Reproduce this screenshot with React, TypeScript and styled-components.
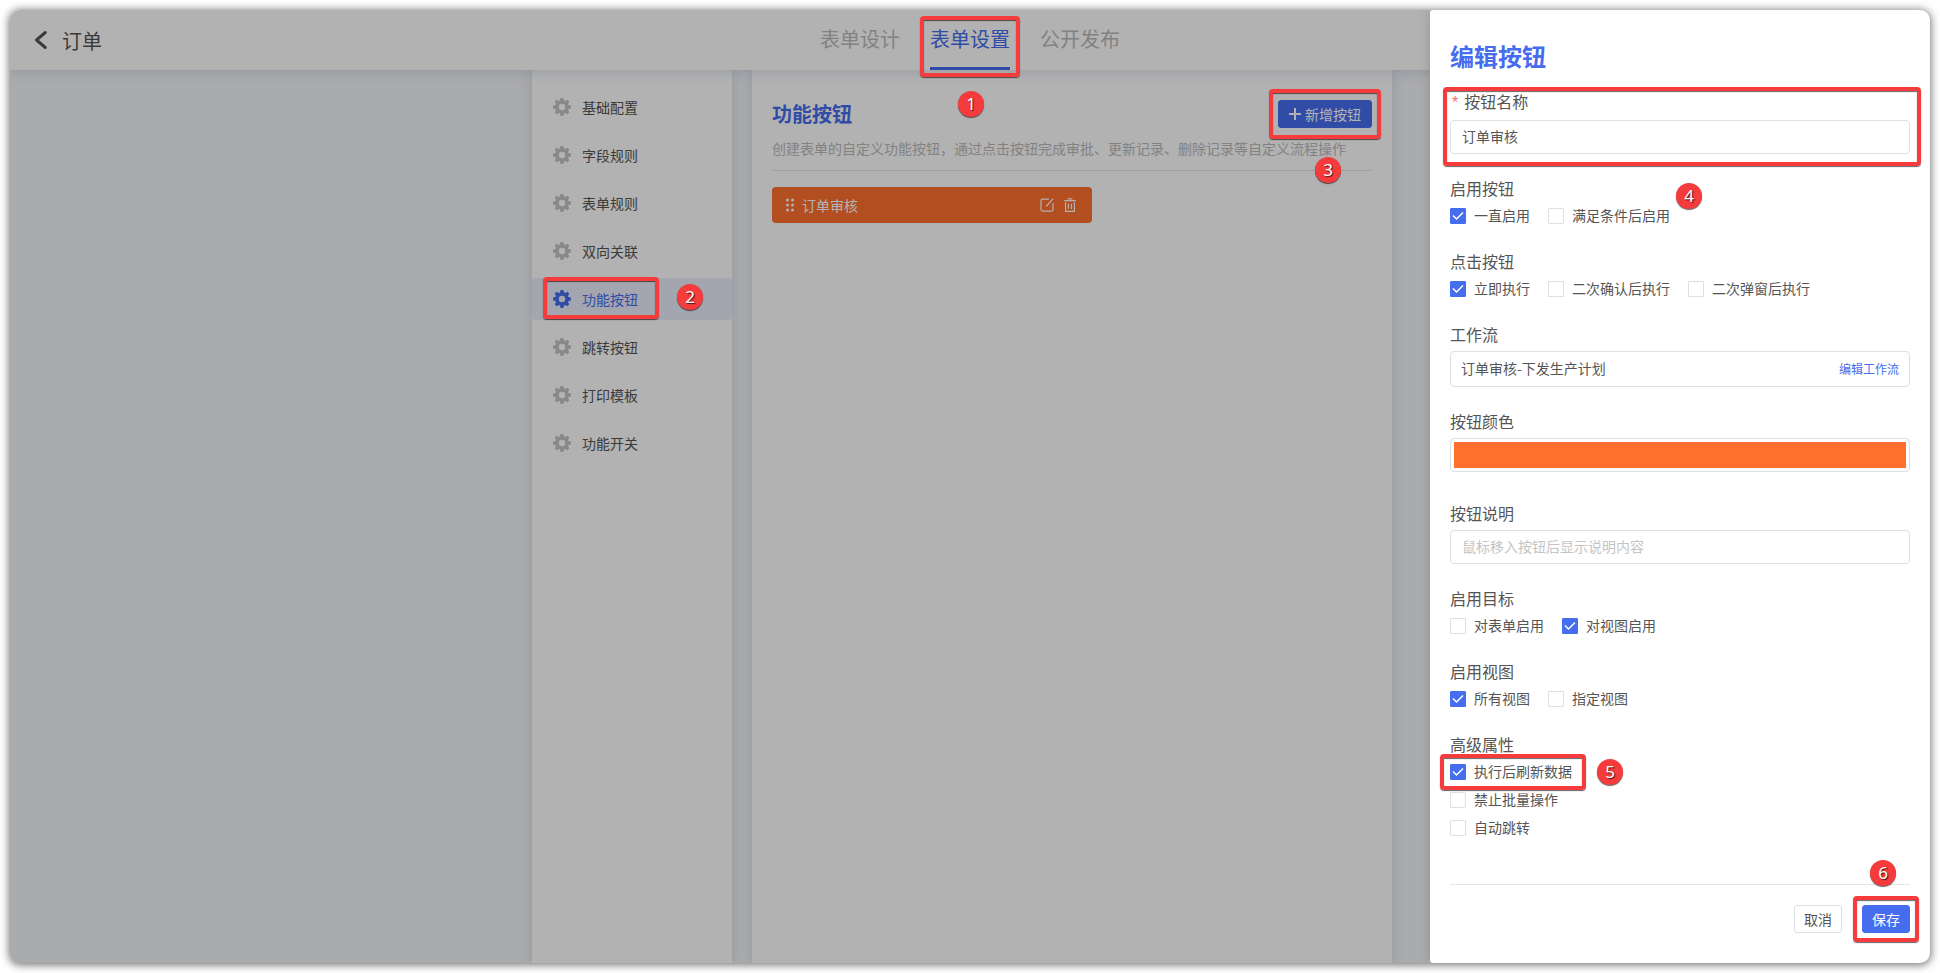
import React from 'react';
import styled, { createGlobalStyle, css } from 'styled-components';

const GlobalStyle = createGlobalStyle`
  *, *::before, *::after { box-sizing: border-box; }
  body {
    margin: 0;
    background: #fff;
    color: #555;
    font-family: 'Noto Sans CJK SC', 'Liberation Sans', sans-serif;
    font-size: 14px;
  }
  button, input { font: inherit; color: inherit; }
  h1, h2, p, ul, fieldset { margin: 0; padding: 0; }
`;

const BLUE = '#466dee';
const RED = '#f53b3b';
const ORANGE = '#ff702e';

const Frame = styled.div`
  display: grid;
  min-height: 100vh;
  padding: 10px;
`;

const Window = styled.div`
  display: grid;
  overflow: hidden;
  border-radius: 10px;
  background: #f4f5f8;
  box-shadow: 0 1px 9px 1px rgba(0, 0, 0, 0.55);
  > * { grid-area: 1 / 1; }
`;

const Page = styled.div`
  display: flex;
  flex-direction: column;
`;

const Mask = styled.div`
  z-index: 10;
  background: rgba(0, 0, 0, 0.3);
`;

/* Numbered call-outs drawn over the interface */
const Outline = styled.span<{ $inset: string }>`
  position: absolute;
  inset: ${(p) => p.$inset};
  z-index: 20;
  border: 4px solid ${RED};
  border-radius: 4px;
  box-shadow: 0 1px 1px rgba(0, 0, 0, 0.6), inset 0 1px 1px rgba(0, 0, 0, 0.6);
  pointer-events: none;
`;

const Step = styled.span<{ $left: number; $top: number }>`
  position: absolute;
  left: ${(p) => p.$left}px;
  top: ${(p) => p.$top}px;
  z-index: 20;
  width: 26px;
  height: 26px;
  border-radius: 50%;
  background: ${RED};
  box-shadow: 0 1px 1px rgba(0, 0, 0, 0.6);
  color: #fff;
  font: 17px/26px 'Noto Sans', sans-serif;
  text-align: center;
  text-shadow: 1px 1px 1px rgba(0, 0, 0, 0.7);
  pointer-events: none;
`;

const Header = styled.header`
  position: relative;
  display: grid;
  grid-template-columns: 1fr auto 1fr;
  height: 60px;
  background: #fff;
  box-shadow: 0 2px 12px rgba(40, 60, 120, 0.16);
`;

const Back = styled.button`
  display: flex;
  align-items: center;
  justify-self: start;
  gap: 14px;
  padding: 0 24px;
  border: 0;
  background: none;
  font-size: 20px;
`;

const Tabs = styled.nav`
  display: flex;
  gap: 30px;
`;

const Tab = styled.a<{ $active?: boolean }>`
  position: relative;
  height: 60px;
  border-bottom: 3px solid transparent;
  color: #bbb;
  font-size: 20px;
  line-height: 58px;
  text-decoration: none;
  ${(p) => p.$active && css`
    border-color: ${BLUE};
    color: ${BLUE};
  `}
`;

const Content = styled.div`
  display: flex;
  flex: 1;
  justify-content: center;
  gap: 20px;
  padding-right: 16px;
`;

const Panel = styled.div`
  background: #fff;
  box-shadow: 0 0 12px rgba(40, 60, 120, 0.16);
`;

const Menu = styled(Panel).attrs({ as: 'nav' })`
  display: flex;
  flex-direction: column;
  gap: 6px;
  width: 200px;
  padding-top: 16px;
`;

const MenuItem = styled.a<{ $active?: boolean }>`
  position: relative;
  display: flex;
  align-items: center;
  gap: 10px;
  height: 42px;
  padding-left: 20px;
  border-radius: 4px;
  color: #555;
  text-decoration: none;
  svg { color: #c4c4c4; }
  ${(p) => p.$active && css`
    background: #ebeefb;
    color: ${BLUE};
    svg { color: ${BLUE}; }
  `}
`;

const Main = styled(Panel).attrs({ as: 'main' })`
  width: 640px;
  padding: 28px 20px;
`;

const TitleRow = styled.div`
  display: flex;
  align-items: center;
  justify-content: space-between;
  height: 32px;
`;

const PageTitle = styled.h1`
  color: ${BLUE};
  font-size: 20px;
  line-height: 30px;
`;

const Button = styled.button<{ $primary?: boolean; $pad?: number }>`
  position: relative;
  display: flex;
  align-items: center;
  justify-content: center;
  gap: 4px;
  height: 28px;
  padding: 0 ${(p) => p.$pad ?? 9}px;
  border: 1px solid ${(p) => (p.$primary ? BLUE : '#dcdfe6')};
  border-radius: 3px;
  background: ${(p) => (p.$primary ? BLUE : '#fff')};
  color: ${(p) => (p.$primary ? '#fff' : '#555')};
  line-height: 20px;
  white-space: nowrap;
`;

const Hint = styled.p`
  position: relative;
  padding: 7px 0 11px;
  border-bottom: 1px solid #e4e4e4;
  color: #bbb;
  line-height: 22px;
`;

const ActionCard = styled.div`
  display: flex;
  align-items: center;
  gap: 8px;
  width: 320px;
  height: 36px;
  margin-top: 16px;
  padding: 0 16px 0 14px;
  border-radius: 4px;
  background: ${ORANGE};
  color: #fff;
`;

const ActionName = styled.span`
  flex: 1;
`;

const CardTools = styled.div`
  display: flex;
  gap: 10px;
`;

const IconButton = styled.button`
  display: flex;
  padding: 0;
  border: 0;
  background: none;
`;

const Drawer = styled.form`
  position: relative;
  z-index: 11;
  display: flex;
  flex-direction: column;
  justify-self: end;
  width: 500px;
  padding: 29px 20px 30px;
  border-radius: 3px 0 0 3px;
  background: #fff;
  box-shadow: 0 0 12px rgba(0, 0, 0, 0.16);
`;

const DrawerTitle = styled.h2`
  margin-bottom: 17px;
  color: ${BLUE};
  font-size: 24px;
  line-height: 34px;
`;

const Field = styled.div<{ $gap?: number }>`
  position: relative;
  margin-bottom: ${(p) => p.$gap ?? 23}px;
`;

const Group = styled.fieldset`
  position: relative;
  min-width: 0;
  margin-bottom: 20px;
  border: 0;
`;

const labelText = css`
  display: block;
  padding: 0 0 3px;
  font-size: 16px;
  line-height: 22px;
`;

const Label = styled.label`
  ${labelText}
`;

const Legend = styled.legend`
  ${labelText}
`;

const Required = styled.span`
  margin: 0 6px 0 2px;
  color: #f56c6c;
  font-family: 'Liberation Sans', sans-serif;
`;

const box = css`
  width: 100%;
  height: 34px;
  margin: 3px 0 0;
  border: 1px solid #dcdfe6;
  border-radius: 4px;
  background: #fff;
`;

const TextInput = styled.input`
  ${box}
  display: block;
  padding: 0 11px 2px;
  &::placeholder { color: #c4c4c4; opacity: 1; }
`;

const ColorInput = styled.input`
  ${box}
  display: block;
  padding: 3px;
  &::-webkit-color-swatch-wrapper { padding: 0; }
  &::-webkit-color-swatch { border: 0; border-radius: 0; }
`;

const FlowBox = styled.div`
  ${box}
  display: flex;
  align-items: center;
  height: 36px;
  padding: 0 10px 2px;
`;

const FlowInput = styled.input`
  flex: 1;
  min-width: 0;
  padding: 0;
  border: 0;
  outline: 0;
  background: none;
`;

const FlowLink = styled.a`
  color: ${BLUE};
  font-size: 12px;
  text-decoration: none;
`;

const Options = styled.div<{ $stacked?: boolean }>`
  display: flex;
  flex-direction: ${(p) => (p.$stacked ? 'column' : 'row')};
  align-items: flex-start;
  gap: ${(p) => (p.$stacked ? 0 : 18)}px;
`;

const Option = styled.label`
  position: relative;
  display: flex;
  align-items: center;
  gap: 8px;
  height: 28px;
`;

const OptionText = styled.span`
  padding-bottom: 2px;
  line-height: 20px;
`;

const CheckMark = styled.span`
  display: grid;
  width: 16px;
  height: 16px;
  > * { grid-area: 1 / 1; }
  svg { pointer-events: none; z-index: 1; }
`;

const CheckInput = styled.input`
  appearance: none;
  width: 16px;
  height: 16px;
  margin: 0;
  border: 1px solid #dcdfe6;
  border-radius: 1px;
  background: #fff;
  &:checked { border-color: ${BLUE}; background: ${BLUE}; }
  & + svg { visibility: hidden; }
  &:checked + svg { visibility: visible; }
`;

const Footer = styled.footer`
  position: relative;
  display: flex;
  justify-content: flex-end;
  gap: 20px;
  margin-top: auto;
  padding-top: 20px;
  border-top: 1px solid #e4e4e4;
`;

const GearIcon = () => (
  <svg width="20" height="20" viewBox="0 0 20 20" aria-hidden="true">
    <g fill="currentColor">
      {[0, 45, 90, 135, 180, 225, 270, 315].map((a) => (
        <path key={a} d="M7.700 4.500 8.600 1.100h2.800l.9 3.400z" transform={`rotate(${a} 10 10)`} />
      ))}
    </g>
    <circle cx="10" cy="10" r="5" fill="none" stroke="currentColor" strokeWidth="3.600" />
  </svg>
);

const BackIcon = () => (
  <svg width="14" height="20" viewBox="0 0 14 20" fill="none" stroke="currentColor" strokeWidth="3" strokeLinecap="round" strokeLinejoin="round" aria-hidden="true">
    <path d="M11.300 2.500 2.500 10l8.800 7.500" />
  </svg>
);

const PlusIcon = () => (
  <svg width="12" height="12" viewBox="0 0 12 12" stroke="currentColor" strokeWidth="2" aria-hidden="true">
    <path d="M6 0v12M0 6h12" />
  </svg>
);

const DragIcon = () => (
  <svg width="8" height="14" viewBox="0 0 8 14" fill="currentColor" aria-hidden="true">
    {[2, 7, 12].map((y) => (
      <React.Fragment key={y}>
        <circle cx="1.500" cy={y} r="1.500" />
        <circle cx="6.500" cy={y} r="1.500" />
      </React.Fragment>
    ))}
  </svg>
);

const EditIcon = () => (
  <svg width="14" height="14" viewBox="0 0 14 14" fill="none" stroke="currentColor" strokeWidth="1.200" strokeLinecap="round" aria-hidden="true">
    <path d="M8.500 1.100H2.500A1.500 1.500 0 0 0 1 2.600v9A1.500 1.500 0 0 0 2.500 13.100h9a1.500 1.500 0 0 0 1.500-1.500V5.500M6.500 8l6.200-6.800" />
  </svg>
);

const TrashIcon = () => (
  <svg width="12" height="14" viewBox="0 0 12 14" fill="none" stroke="currentColor" strokeWidth="1.200" strokeLinecap="round" aria-hidden="true">
    <path d="M.6 2.600h10.800M4 .8h4M1.600 4.600v8.700h8.800V4.600M4.500 6v4.500M7.500 6v4.500" />
  </svg>
);

const TickIcon = () => (
  <svg width="16" height="16" viewBox="0 0 16 16" fill="none" stroke="#fff" strokeWidth="1.500" aria-hidden="true">
    <path d="M3 7.500 6.500 11 13 4.500" />
  </svg>
);

function Check({ label, on, children }: { label: string; on?: boolean; children?: React.ReactNode }) {
  return (
    <Option>
      <CheckMark>
        <CheckInput type="checkbox" defaultChecked={on} />
        <TickIcon />
      </CheckMark>
      <OptionText>{label}</OptionText>
      {children}
    </Option>
  );
}

const MENU = ['基础配置', '字段规则', '表单规则', '双向关联', '功能按钮', '跳转按钮', '打印模板', '功能开关'];
const ACTIVE = '功能按钮';

export default function App() {
  return (
    <Frame>
      <GlobalStyle />
      <Window>
        <Page>
          <Header>
            <Back type="button"><BackIcon />订单</Back>
            <Tabs>
              <Tab href="#design">表单设计</Tab>
              <Tab href="#settings" $active>
                表单设置
                <Outline $inset="6px -10px -10px" />
                <Step $left={28} $top={81}>1</Step>
              </Tab>
              <Tab href="#publish">公开发布</Tab>
            </Tabs>
          </Header>
          <Content>
            <Menu>
              {MENU.map((name) => (
                <MenuItem key={name} href="#menu" $active={name === ACTIVE}>
                  <GearIcon />
                  {name}
                  {name === ACTIVE && (
                    <>
                      <Outline $inset="-1px 73px 1px 11px" />
                      <Step $left={145} $top={6}>2</Step>
                    </>
                  )}
                </MenuItem>
              ))}
            </Menu>
            <Main>
              <TitleRow>
                <PageTitle>功能按钮</PageTitle>
                <Button type="button" $primary $pad={10}>
                  <PlusIcon />新增按钮
                  <Outline $inset="-12px -10px" />
                </Button>
              </TitleRow>
              <Hint>
                创建表单的自定义功能按钮，通过点击按钮完成审批、更新记录、删除记录等自定义流程操作
                <Step $left={543} $top={27}>3</Step>
              </Hint>
              <ActionCard>
                <DragIcon />
                <ActionName>订单审核</ActionName>
                <CardTools>
                  <IconButton type="button" aria-label="编辑"><EditIcon /></IconButton>
                  <IconButton type="button" aria-label="删除"><TrashIcon /></IconButton>
                </CardTools>
              </ActionCard>
            </Main>
          </Content>
        </Page>
        <Mask />
        <Drawer>
          <DrawerTitle>编辑按钮</DrawerTitle>
          <Field>
            <Label htmlFor="name"><Required>*</Required>按钮名称</Label>
            <TextInput id="name" defaultValue="订单审核" />
            <Outline $inset="-3px -11px -12px -7px" />
          </Field>
          <Group>
            <Legend>启用按钮</Legend>
            <Options>
              <Check label="一直启用" on />
              <Check label="满足条件后启用" />
            </Options>
            <Step $left={226} $top={-19}>4</Step>
          </Group>
          <Group>
            <Legend>点击按钮</Legend>
            <Options>
              <Check label="立即执行" on />
              <Check label="二次确认后执行" />
              <Check label="二次弹窗后执行" />
            </Options>
          </Group>
          <Field>
            <Label htmlFor="flow">工作流</Label>
            <FlowBox>
              <FlowInput id="flow" defaultValue="订单审核-下发生产计划" readOnly />
              <FlowLink href="#flow">编辑工作流</FlowLink>
            </FlowBox>
          </Field>
          <Field $gap={30}>
            <Label htmlFor="color">按钮颜色</Label>
            <ColorInput id="color" type="color" defaultValue={ORANGE} />
          </Field>
          <Field>
            <Label htmlFor="tip">按钮说明</Label>
            <TextInput id="tip" placeholder="鼠标移入按钮后显示说明内容" />
          </Field>
          <Group>
            <Legend>启用目标</Legend>
            <Options>
              <Check label="对表单启用" />
              <Check label="对视图启用" on />
            </Options>
          </Group>
          <Group>
            <Legend>启用视图</Legend>
            <Options>
              <Check label="所有视图" on />
              <Check label="指定视图" />
            </Options>
          </Group>
          <Group>
            <Legend>高级属性</Legend>
            <Options $stacked>
              <Check label="执行后刷新数据" on>
                <Outline $inset="-4px -14px -4px -10px" />
                <Step $left={147} $top={1}>5</Step>
              </Check>
              <Check label="禁止批量操作" />
              <Check label="自动跳转" />
            </Options>
          </Group>
          <Footer>
            <Button type="button">取消</Button>
            <Button type="submit" $primary>
              保存
              <Outline $inset="-10px" />
              <Step $left={7} $top={-46}>6</Step>
            </Button>
          </Footer>
        </Drawer>
      </Window>
    </Frame>
  );
}
